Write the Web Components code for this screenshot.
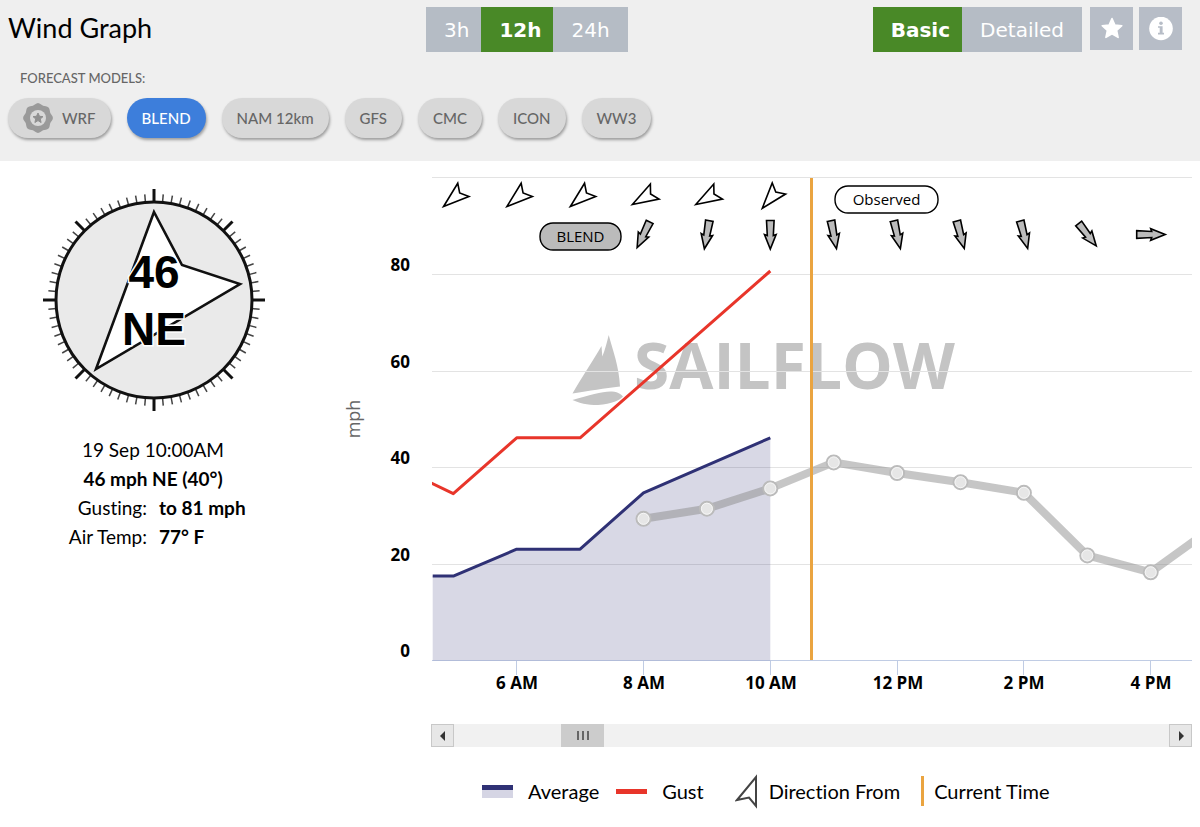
<!DOCTYPE html>
<html lang="en">
<head>
<meta charset="utf-8">
<meta name="viewport" content="width=device-width, initial-scale=1">
<title>Wind Graph</title>
<style>
    body{
        margin: 0;
        background: #fff;
        color: #000;
        font-family: Lato, "Open Sans", sans-serif;
        font-variant-ligatures: none;
    }
</style>
</head>
<body>
<wind-page></wind-page>

<script>
"use strict"

class SegmentButton extends HTMLElement{
    constructor(){
        super();
        this.attachShadow({mode: "open"});
    }

    connectedCallback(){
        const active = this.hasAttribute('active');
        this.shadowRoot.innerHTML = `
        <style>
        :host{ display: block; }

        button{
            height: 45px;
            padding: 0 12px 0 18px;
            border: 0;
            background: #b5bcc5;
            color: #fff;
            font: 20px "DejaVu Sans", Verdana, sans-serif;
            cursor: pointer;
        }

        :host([last]) button{ padding: 0 18px; }

        :host([active]) button{
            background: #498927;
            font-weight: 700;
        }
        </style>
        <button type="button" aria-pressed="${active}"><slot></slot></button>
        `
    }
}

class IconButton extends HTMLElement{
    constructor(){
        super();
        this.attachShadow({mode: "open"});
    }

    connectedCallback(){
        this.shadowRoot.innerHTML = `
        <style>
        :host{ display: block; }

        button{
            display: grid;
            place-items: center;
            width: 43px;
            height: 43px;
            padding: 0;
            border: 0;
            background: #b7bdc7;
            color: #fff;
            cursor: pointer;
        }
        </style>
        <button type="button" aria-label="${this.getAttribute('label')}"><slot></slot></button>
        `
    }
}

class ModelChip extends HTMLElement{
    constructor(){
        super();
        this.attachShadow({mode: "open"});
    }

    connectedCallback(){
        const active = this.hasAttribute('active');
        this.shadowRoot.innerHTML = `
        <style>
        :host{ display: block; }

        button{
            display: flex;
            align-items: center;
            gap: 9px;
            height: 40px;
            padding: 0 15px;
            border: 0;
            border-radius: 20px;
            background: #d8d8d8;
            color: #666;
            box-shadow: 1px 2px 3px rgba(0, 0, 0, .35);
            font: 500 15px Lato, "Open Sans", sans-serif;
            white-space: nowrap;
            cursor: pointer;
        }

        :host([active]) button{
            background: #3d7edb;
            color: #fff;
        }
        </style>
        <button type="button" aria-pressed="${active}"><slot name="icon"></slot><slot></slot></button>
        `
    }
}

class WindHeader extends HTMLElement{
    constructor(){
        super();
        this.attachShadow({mode: "open"});
    }

    connectedCallback(){
        this.shadowRoot.innerHTML = `${this.styles()} ${this.render()}`
    }

    // eight-lobed seal round the star
    seal(){
        const pts = [];
        for(let i = 0; i < 64; i++){
            const a = i / 64 * Math.PI * 2;
            const r = 14.1 + .8 * Math.cos(a * 8);
            pts.push(`${(r * Math.sin(a)).toFixed(2)},${(-r * Math.cos(a)).toFixed(2)}`);
        }
        return pts.join(' ');
    }

    render(){
        return `
        <header>
            <div class="top">
                <h1>Wind Graph</h1>
                <div class="group">
                    <segment-button>3h</segment-button>
                    <segment-button active>12h</segment-button>
                    <segment-button last>24h</segment-button>
                </div>
                <div class="actions">
                    <div class="group">
                        <segment-button active>Basic</segment-button>
                        <segment-button last>Detailed</segment-button>
                    </div>
                    <div class="icons">
                        <icon-button label="Favorite">
                            <svg width="24" height="24" viewBox="0 0 24 24"><path fill="#fff" stroke="#fff" stroke-width="1.6" stroke-linejoin="round" d="M12 1.6 14.9 8 21.8 8.7 16.6 13.4 18.1 20.4 12 16.8 5.9 20.4 7.4 13.4 2.2 8.7 9.1 8Z"/></svg>
                        </icon-button>
                        <icon-button label="Information">
                            <svg width="24" height="24" viewBox="0 0 24 24"><circle cx="12" cy="11.5" r="11.8" fill="#fff"/><circle cx="12" cy="6.2" r="1.8" fill="#b7bdc7"/><path fill="#b7bdc7" d="M9 9.2h4.6v6.600h1.400v1.600H9v-1.600h1.700v-5H9z"/></svg>
                        </icon-button>
                    </div>
                </div>
            </div>
            <h2>FORECAST MODELS:</h2>
            <div class="models">
                <model-chip>
                    <svg slot="icon" width="30" height="30" viewBox="-15 -15 30 30">
                        <polygon fill="#9a9a9a" points="${this.seal()}"/>
                        <circle r="8" fill="#d8d8d8"/>
                        <path fill="#8f8f8f" stroke="#8f8f8f" stroke-linejoin="round" d="M0-5 1.5-1.7 5-1.4 2.3 1 3.1 4.5 0 2.6-3.1 4.5-2.3 1-5-1.4-1.5-1.7Z"/>
                    </svg>WRF</model-chip>
                <model-chip active>BLEND</model-chip>
                <model-chip>NAM 12km</model-chip>
                <model-chip>GFS</model-chip>
                <model-chip>CMC</model-chip>
                <model-chip>ICON</model-chip>
                <model-chip>WW3</model-chip>
            </div>
        </header>
        `
    }

    styles(){
        return `
        <style>
        :host{
            display: block;
            background: #efefef;
        }

        header{ padding: 7px 18px 23px 8px; }

        .top{
            display: grid;
            grid-template-columns: 418px 1fr auto;
            align-items: start;
        }

        h1{
            margin: 0;
            font-size: 27px;
            font-weight: 400;
            line-height: 41px;
        }

        .group, .icons, .models{ display: flex; }
        .actions{ display: flex; gap: 8px; }
        .icons{ gap: 6px; }
        .models{ gap: 16px; flex-wrap: wrap; }

        h2{
            margin: 16px 12px 10px;
            color: #666;
            font-size: 13px;
            font-weight: 500;
            line-height: 20px;
        }
        </style>
        `
    }
}

class WindCompass extends HTMLElement{
    constructor(){
        super();
        this.attachShadow({mode: "open"});
    }

    connectedCallback(){
        this.shadowRoot.innerHTML = `
        <style>
        :host{ display: block; }
        svg{ display: block; width: 224px; height: 224px; }
        text{
            font: 700 46px "Liberation Sans", Arial, sans-serif;
            text-anchor: middle;
            paint-order: stroke;
            stroke: #fff;
            stroke-width: 3;
        }
        </style>
        <svg viewBox="-112 -112 224 224" role="img" aria-label="Wind direction">
            ${this.ticks()}
            <circle r="98" fill="#eaeaea" stroke="#111" stroke-width="3"/>
            <path fill="#fff" stroke="#111" stroke-width="2.6" d="M0-88 28-35 86-16-58 69Z"/>
            <text x="0" y="-12">${this.getAttribute('speed')}</text>
            <text x="0" y="45">${this.getAttribute('heading')}</text>
        </svg>
        `
    }

    ticks(){
        let out = '';
        for(let a = 0; a < 360; a += 5){
            const major = a % 45 === 0;
            out += `<line y1="-98" y2="${major ? -111 : -106}" stroke="${major ? '#111' : '#444'}" stroke-width="${major ? 3 : 1.5}" transform="rotate(${a})"/>`;
        }
        return out;
    }
}

class WindReadout extends HTMLElement{
    constructor(){
        super();
        this.attachShadow({mode: "open"});
    }

    connectedCallback(){
        this.shadowRoot.innerHTML = `
        <style>
        :host{
            display: block;
            font-size: 19px;
            line-height: 29px;
        }
        p{ margin: 0; width: 306px; text-align: center; }
        dl{
            display: grid;
            grid-template-columns: 147px 1fr;
            column-gap: 12px;
            margin: 0;
        }
        dt{ text-align: right; }
        dd{ margin: 0; }
        b, dd{ font-weight: 700; }
        </style>
        <p>19 Sep 10:00AM</p>
        <p><b>46 mph NE (40°)</b></p>
        <dl>
            <dt>Gusting:</dt><dd>to 81 mph</dd>
            <dt>Air Temp:</dt><dd>77° F</dd>
        </dl>
        `
    }
}

class WindChart extends HTMLElement{
    constructor(){
        super();
        this.attachShadow({mode: "open"});
        this.left = 92;
        this.right = 852;
        this.top = 17;
        this.base = 499;

        // [hour, mph]
        this.average = [[4.675, 17.5], [5, 17.5], [6, 23.1], [7, 23.1], [8, 34.8], [9, 40.5], [10, 46.2]];
        this.gust = [[4, 41], [5, 34.6], [6, 46.2], [7, 46.2], [10, 80.8]];
        this.blend = [[8, 29.4], [9, 31.5], [10, 35.7], [11, 41.1], [12, 38.9], [13, 37], [14, 34.8], [15, 21.8], [16, 18.3], [17, 27.8]];

        // [hour, degrees]
        this.observedDir = [[5, 50], [6, 50], [7, 50], [8, 60], [9, 60], [10, 40]];
        this.blendDir = [[8, 26], [9, 10], [10, 0], [11, -11], [12, -13], [13, -15], [14, -15], [15, -38], [16, -90]];
    }

    x(hour){
        return +(176.7 + (hour - 6) * 63.4).toFixed(1);
    }

    y(mph){
        return +(499.5 - mph * 4.82).toFixed(1);
    }

    line(data){
        return data.map(([h, v]) => `${this.x(h)},${this.y(v)}`).join(' ');
    }

    connectedCallback(){
        this.shadowRoot.innerHTML = `${this.styles()} ${this.render()}`
    }

    axes(){
        const rows = [0, 20, 40, 60, 80].map(v => {
            const y = Math.floor(this.y(v)) + .5;
            const grid = v ? `<line class="grid" x1="${this.left}" x2="${this.right}" y1="${y}" y2="${y}"/>` : '';
            return `${grid}<text class="axis" text-anchor="end" x="70" y="${y - 4}">${v}</text>`
        }).join('');

        const cols = ['6 AM', '8 AM', '10 AM', '12 PM', '2 PM', '4 PM'].map((t, i) => {
            const x = Math.floor(this.x(6 + i * 2)) + .5;
            return `<line class="tick" x1="${x}" x2="${x}" y1="499" y2="514"/>
                <text class="axis" text-anchor="middle" x="${x + .5}" y="528">${t}</text>`
        }).join('');

        return `<line class="grid" x1="${this.left}" x2="${this.right}" y1="16.5" y2="16.5"/>${rows}${cols}`
    }

    logo(){
        return `
        <g fill="#c4c4c4">
            <path d="M268.7 174C273 190 279 205 280 225.5 264 227 250 230 232.5 232.5 240 219 253 200 261.5 185L262.3 195.5C265 189 267 181 268.7 174Z"/>
            <path d="M232.5 239C250 234 263 230 272 230.5 279 231 282 234 283 235.5 280 239 272 243 258 244 247 244 239 242 232.5 239Z"/>
            <text class="logo" x="294" y="228">SAILFLOW</text>
        </g>
        `
    }

    render(){
        const avg = this.line(this.average);
        return `
        <svg viewBox="0 0 860 550" role="img" aria-label="Wind speed by hour">
            <defs>
                <clipPath id="plot"><rect x="${this.left}" y="${this.top}" width="${this.right - this.left}" height="${this.base - this.top + 1}"/></clipPath>
            </defs>
            ${this.logo()}
            ${this.axes()}
            <line class="base" x1="${this.left}" x2="${this.right}" y1="499.5" y2="499.5"/>
            <text class="unit" text-anchor="middle" transform="translate(20 258) rotate(-90)">mph</text>

            <g clip-path="url(#plot)">
                <polygon fill="#2f3175" fill-opacity=".19" points="${this.x(4.675)},499.5 ${avg} ${this.x(10)},499.5"/>
                <polyline class="average" points="${avg}"/>
                <polyline class="gust" points="${this.line(this.gust)}"/>
                <polyline class="blend" points="${this.line(this.blend)}"/>
            </g>
            ${this.blend.slice(0, -1).map(([h, v]) => `<circle class="dot" cx="${this.x(h)}" cy="${this.y(v)}" r="7"/><circle class="ring" cx="${this.x(h)}" cy="${this.y(v)}" r="5.5"/>`).join('')}
            <line class="now" x1="471.5" x2="471.5" y1="17" y2="499"/>

            ${this.observedDir.map(([h, a]) => `<path class="dir" transform="translate(${this.x(h) + 1} 36.5) rotate(${a})" d="M0 14 8.7-11.8 0-7-8.7-11.8Z"/>`).join('')}
            ${this.blendDir.map(([h, a]) => `<path class="arrow" transform="translate(${this.x(h)} 73.5) rotate(${a})" d="M-3.8-14H3.8L3 1 5.8 0 0 14.5-5.8 0-3 1Z"/>`).join('')}

            <rect class="pill" x="200" y="62" width="81" height="27" rx="13" fill="#bbb"/>
            <text class="label" text-anchor="middle" x="240.5" y="81">BLEND</text>
            <rect class="pill" x="495" y="25" width="103" height="27" rx="13" fill="#fff"/>
            <text class="label" text-anchor="middle" x="546.5" y="44">Observed</text>
        </svg>
        `
    }

    styles(){
        return `
        <style>
        :host{ display: block; }
        svg{ display: block; width: 100%; height: auto; }
        text{ font-family: "Open Sans", "Noto Sans", sans-serif; }
        .axis{ font-size: 17px; font-weight: 700; }
        .unit{ font-size: 18px; fill: #666; }
        .label{ font-size: 15px; }
        .logo{ font-size: 64px; font-weight: 700; }
        .grid{ stroke: #e3e3e3; }
        .tick, .base{ stroke: #c0cce4; }
        .average, .gust, .blend{ fill: none; stroke-linejoin: round; }
        .average{ stroke: #2f3175; stroke-width: 3; }
        .gust{ stroke: #e8352a; stroke-width: 3; }
        .blend{ stroke: #888; stroke-opacity: .48; stroke-width: 8; }
        .dot{ fill: #e6e6e6; stroke: #bbb; stroke-width: 2; }
        .ring{ fill: none; stroke: #f6f6f6; }
        .now{ stroke: #eaa440; stroke-width: 3; }
        .dir{ fill: #fff; stroke: #000; stroke-width: 1.6; }
        .arrow{ fill: #bbb; stroke: #000; stroke-width: 1.6; }
        .pill{ stroke: #000; stroke-width: 1.4; }
        </style>
        `
    }
}

class ChartScrollbar extends HTMLElement{
    constructor(){
        super();
        this.attachShadow({mode: "open"});
    }

    connectedCallback(){
        this.shadowRoot.innerHTML = `
        <style>
        :host{ display: flex; }
        button{
            box-sizing: border-box;
            display: grid;
            place-items: center;
            width: 23px;
            height: 23px;
            padding: 0;
            border: 1px solid #c8c8c8;
            background: #e7e7e7;
        }
        .track{ flex: 1; background: #f1f1f1; }
        .thumb{
            display: grid;
            place-items: center;
            width: 6%;
            height: 23px;
            margin-left: 15%;
            background: #ccc;
        }
        </style>
        <button type="button" aria-label="Earlier"><svg width="6" height="10" viewBox="0 0 6 10"><path fill="#333" d="M5 0V10L0 5Z"/></svg></button>
        <div class="track">
            <div class="thumb"><svg width="12" height="10" viewBox="0 0 12 10"><path stroke="#444" stroke-width="1.5" d="M1 0V9M6 0V9M11 0V9"/></svg></div>
        </div>
        <button type="button" aria-label="Later"><svg width="6" height="10" viewBox="0 0 6 10"><path fill="#333" d="M1 0V10L6 5Z"/></svg></button>
        `
    }
}

class ChartLegend extends HTMLElement{
    constructor(){
        super();
        this.attachShadow({mode: "open"});
    }

    connectedCallback(){
        this.shadowRoot.innerHTML = `
        <style>
        :host{ display: block; }
        ul{
            display: flex;
            flex-wrap: wrap;
            gap: 17px;
            margin: 0;
            padding: 0;
            list-style: none;
            font-size: 20px;
            line-height: 36px;
        }
        li{ display: flex; align-items: center; gap: 15px; }
        .dir{ gap: 10px; margin-left: 14px; }
        .now{ gap: 10px; margin-left: 4px; }
        svg{ display: block; }
        </style>
        <ul>
            <li><svg width="31" height="13"><rect width="31" height="13" fill="#d5d5e4"/><rect width="31" height="5" fill="#2f3175"/></svg>Average</li>
            <li><svg width="31" height="5"><rect width="31" height="5" fill="#e8352a"/></svg>Gust</li>
            <li class="dir"><svg width="24" height="36" viewBox="0 0 24 36"><path fill="#fff" stroke="#444" stroke-width="2" d="M21 4V33L14 24.5 2 27Z"/></svg>Direction From</li>
            <li class="now"><svg width="3" height="30"><rect width="3" height="30" fill="#eaa440"/></svg>Current Time</li>
        </ul>
        `
    }
}

class WindPage extends HTMLElement{
    constructor(){
        super();
        this.attachShadow({mode: "open"});
    }

    connectedCallback(){
        this.shadowRoot.innerHTML = `
        <style>
        :host{ display: block; }
        main{
            display: grid;
            grid-template-columns: 340px 1fr;
        }
        wind-compass{ margin: 27px 0 0 42px; }
        wind-readout{ margin-top: 23px; }
        chart-scrollbar{ margin: 13px 8px 0 91px; }
        chart-legend{ margin: 26px 0 16px 142px; }
        </style>
        <wind-header></wind-header>
        <main>
            <aside>
                <wind-compass speed="46" heading="NE"></wind-compass>
                <wind-readout></wind-readout>
            </aside>
            <section>
                <wind-chart></wind-chart>
                <chart-scrollbar></chart-scrollbar>
                <chart-legend></chart-legend>
            </section>
        </main>
        `
    }
}

customElements.define('segment-button', SegmentButton);
customElements.define('icon-button', IconButton);
customElements.define('model-chip', ModelChip);
customElements.define('wind-header', WindHeader);
customElements.define('wind-compass', WindCompass);
customElements.define('wind-readout', WindReadout);
customElements.define('wind-chart', WindChart);
customElements.define('chart-scrollbar', ChartScrollbar);
customElements.define('chart-legend', ChartLegend);
customElements.define('wind-page', WindPage);
</script>
</body>
</html>
